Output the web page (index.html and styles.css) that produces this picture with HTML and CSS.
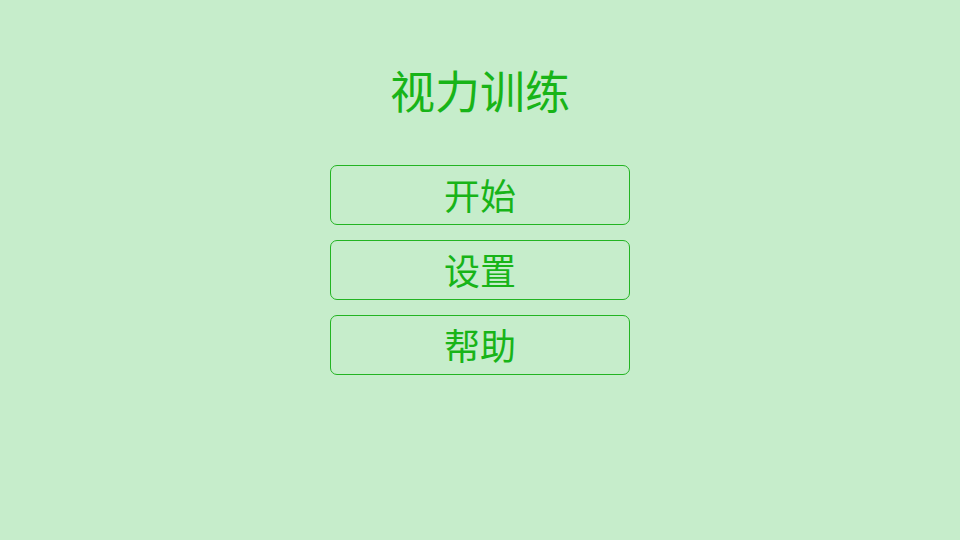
FILE: index.html
```html
<!DOCTYPE html>
<html lang="zh-CN">
<head>
<meta charset="utf-8">
<title>视力训练</title>
<link rel="stylesheet" href="styles.css">
</head>
<body>
<main class="menu">
  <h1 class="title">视力训练</h1>
  <div class="buttons">
    <button class="btn">开始</button>
    <button class="btn">设置</button>
    <button class="btn">帮助</button>
  </div>
</main>
</body>
</html>
```
FILE: styles.css
```css
html, body {
  margin: 0;
  padding: 0;
  width: 960px;
  height: 540px;
  background: #c6edcb;
  overflow: hidden;
}
.menu {
  display: flex;
  flex-direction: column;
  align-items: center;
  padding-top: 60px;
  font-family: "Noto Sans CJK SC", "Noto Sans", sans-serif;
  color: #18b418;
}
.title {
  margin: 0;
  font-size: 45px;
  font-weight: 400;
  line-height: 60px;
  height: 60px;
}
.buttons {
  margin-top: 45px;
  display: flex;
  flex-direction: column;
  gap: 15px;
}
.btn {
  box-sizing: border-box;
  width: 300px;
  height: 60px;
  padding: 0 0 3px;
  background: transparent;
  border: 1.5px solid #22b422;
  border-radius: 7px;
  font-family: inherit;
  font-size: 36px;
  font-weight: 400;
  line-height: 1;
  color: #18b418;
  display: flex;
  align-items: center;
  justify-content: center;
}
```
